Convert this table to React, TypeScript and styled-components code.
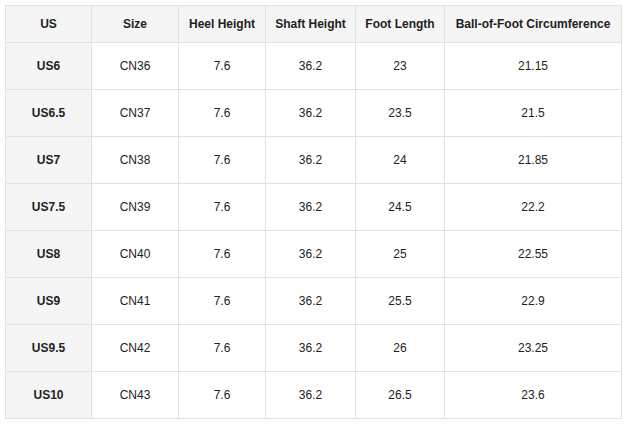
import React from "react";
import styled, { createGlobalStyle } from "styled-components";

const Global = createGlobalStyle`
  html, body { margin: 0; padding: 0; background: #ffffff; }
  body { font-family: "Liberation Sans", Arial, sans-serif; color: #222222; }
`;

const Wrap = styled.div`
  padding: 5px;
`;

const Table = styled.table`
  border-collapse: collapse;
  table-layout: fixed;
  width: 616px;
  font-size: 12px;
`;

const HeadRow = styled.tr`
  height: 37px;
`;

const Row = styled.tr`
  height: 47px;
`;

const Th = styled.th`
  border: 1px solid #e2e2e2;
  background: #f5f5f5;
  font-weight: bold;
  text-align: center;
  padding: 0 4px;
  white-space: nowrap;
`;

const Td = styled.td<{ $label?: boolean }>`
  border: 1px solid #e2e2e2;
  background: ${(p) => (p.$label ? "#f5f5f5" : "#ffffff")};
  font-weight: ${(p) => (p.$label ? "bold" : "normal")};
  text-align: center;
  padding: 0 4px;
`;

const widths = [86, 87, 87, 90, 89, 177];
const headers = ["US", "Size", "Heel Height", "Shaft Height", "Foot Length", "Ball-of-Foot Circumference"];
const rows = [
  ["US6", "CN36", "7.6", "36.2", "23", "21.15"],
  ["US6.5", "CN37", "7.6", "36.2", "23.5", "21.5"],
  ["US7", "CN38", "7.6", "36.2", "24", "21.85"],
  ["US7.5", "CN39", "7.6", "36.2", "24.5", "22.2"],
  ["US8", "CN40", "7.6", "36.2", "25", "22.55"],
  ["US9", "CN41", "7.6", "36.2", "25.5", "22.9"],
  ["US9.5", "CN42", "7.6", "36.2", "26", "23.25"],
  ["US10", "CN43", "7.6", "36.2", "26.5", "23.6"],
];

export default function App() {
  return (
    <Wrap>
      <Global />
      <Table>
        <colgroup>
          {widths.map((w, i) => (
            <col key={i} style={{ width: w }} />
          ))}
        </colgroup>
        <thead>
          <HeadRow>
            {headers.map((h) => (
              <Th key={h}>{h}</Th>
            ))}
          </HeadRow>
        </thead>
        <tbody>
          {rows.map((r) => (
            <Row key={r[0]}>
              {r.map((c, i) => (
                <Td key={i} $label={i === 0}>
                  {c}
                </Td>
              ))}
            </Row>
          ))}
        </tbody>
      </Table>
    </Wrap>
  );
}
